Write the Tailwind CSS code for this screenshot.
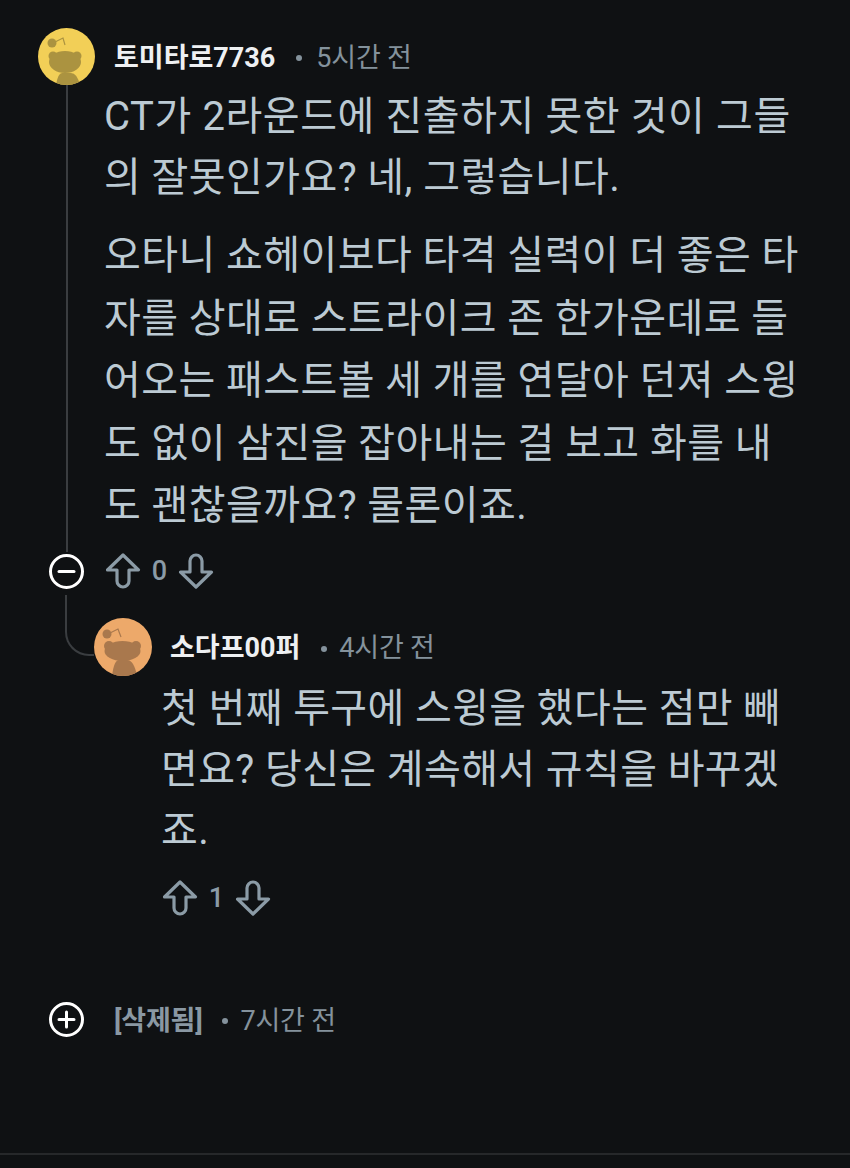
<!doctype html>
<html>
<head>
  <meta charset="UTF-8">
  <meta name="viewport" content="width=device-width, initial-scale=1.0">
  <script src="https://cdn.jsdelivr.net/npm/@tailwindcss/browser@4"></script>
</head>
<body class="bg-[#0f1113] font-['Roboto','Noto_Sans_CJK_KR',sans-serif] w-[850px] h-[1168px] overflow-hidden relative">

  <!-- top comment -->
  <div class="pl-[38px] pt-[28px] flex">
    <div class="w-[57px] shrink-0 flex flex-col items-center">
      <svg width="57" height="57" viewBox="0 0 57 57" class="shrink-0">
        <clipPath id="clipA"><circle cx="28.5" cy="28.5" r="28.5"/></clipPath>
        <circle cx="28.5" cy="28.5" r="28.5" fill="#f2cf57"/>
        <g fill="#ab9340" clip-path="url(#clipA)">
          <circle cx="14" cy="15" r="4.5"/>
          <path d="M17 14 L25 10 L27 17" fill="none" stroke="#ab9340" stroke-width="1.2"/>
          <circle cx="15" cy="28" r="4.5"/>
          <circle cx="39" cy="28" r="4.5"/>
          <ellipse cx="27" cy="34" rx="16" ry="11"/>
          <path d="M18 57 Q20 45 24 45 H33 Q39 45 42 57 Z"/>
        </g>
      </svg>
      <div class="w-[2px] h-[467px] bg-[#3a3d40]"></div>
    </div>
    <div class="pl-[10px] w-[745px]">
      <div class="flex items-center h-[57px] pl-[9px] leading-none pt-[3px]">
        <span class="text-[27px] font-bold text-[#eef0f2]">토미타로7736</span>
        <span class="ml-[21px] w-[6px] h-[6px] rounded-full bg-[#84929c]"></span>
        <span class="ml-[14px] text-[#84929c] text-[27px] tracking-[-0.2px]">5시간 전</span>
      </div>
      <div class="text-[40px] text-[#bccad3] font-normal whitespace-nowrap tracking-[0.42px] -ml-[1px]">
        <p class="leading-[61px] pt-[1px]"><span class="tracking-[0.58px]">CT가 2라운드에 진출하지 못한 것이 그들</span><br>의 잘못인가요? 네, 그렇습니다.</p>
        <p class="mt-[17px] leading-[62.5px]">오타니 쇼헤이보다 타격 실력이 더 좋은 타<br>자를 상대로 스트라이크 존 한가운데로 들<br>어오는 패스트볼 세 개를 연달아 던져 스윙<br>도 없이 삼진을 잡아내는 걸 보고 화를 내<br>도 괜찮을까요? 물론이죠.</p>
      </div>
    </div>
  </div>

  <!-- votes row -->
  <div class="flex items-center pl-[49px] h-[38px]">
    <svg width="35" height="35" viewBox="0 0 35 35" fill="none" stroke="#fff" stroke-width="3"><circle cx="17.5" cy="17.5" r="16"/><path d="M10 17.5H25" stroke-linecap="round"/></svg>
    <svg class="ml-[21px]" width="36" height="38" viewBox="0 0 36 38" fill="none" stroke="#8b9ba6" stroke-width="3.2" stroke-linejoin="round"><path d="M18 3 L33.5 18 H24 V29 a6 6 0 0 1 -12 0 V18 H2.5 Z"/></svg>
    <span class="w-[37px] text-center text-[27px] font-medium text-[#8b9ba6]">0</span>
    <svg width="36" height="38" viewBox="0 0 36 38" fill="none" stroke="#8b9ba6" stroke-width="3.2" stroke-linejoin="round"><path d="M18 35 L33.5 20 H24 V9 a6 6 0 0 0 -12 0 V20 H2.5 Z"/></svg>
  </div>

  <!-- reply -->
  <div class="flex pl-[65px] mt-[5px]">
    <div class="w-[29px] h-[61px] border-l-2 border-b-2 border-[#3a3d40] rounded-bl-[24px] shrink-0"></div>
    <div class="pt-[23px]">
      <div class="flex items-center h-[58px]">
        <svg width="58" height="58" viewBox="0 0 58 58" class="shrink-0">
          <clipPath id="clipB"><circle cx="29" cy="29" r="29"/></clipPath>
          <circle cx="29" cy="29" r="29" fill="#eda96a"/>
          <g fill="#a9784d" clip-path="url(#clipB)">
            <circle cx="13" cy="16" r="4.5"/>
            <path d="M16 15 L24 11 L27 19" fill="none" stroke="#a9784d" stroke-width="1.2"/>
            <circle cx="15" cy="28" r="5"/>
            <circle cx="42" cy="28" r="5"/>
            <ellipse cx="28.5" cy="33" rx="18" ry="10"/>
            <path d="M18 58 Q20 42 25 42 H33 Q40 42 43 58 Z"/>
          </g>
        </svg>
        <span class="ml-[18px] text-[27px] font-bold text-[#eef0f2] leading-none pt-[3px]">소다프00퍼</span>
        <span class="ml-[21px] mt-[3px] w-[6px] h-[6px] rounded-full bg-[#84929c]"></span>
        <span class="ml-[12px] text-[#84929c] text-[27px] leading-none pt-[3px] tracking-[-0.2px]">4시간 전</span>
      </div>
      <div class="pl-[67px] text-[40px] leading-[61px] text-[#bccad3] font-normal whitespace-nowrap tracking-[0.38px] mt-[2px]">
        <p>첫 번째 투구에 스윙을 했다는 점만 빼<br>면요? 당신은 계속해서 규칙을 바꾸겠<br>죠.</p>
      </div>
      <div class="flex items-center h-[38px] pl-[68px] mt-[18px]">
        <svg width="36" height="38" viewBox="0 0 36 38" fill="none" stroke="#8b9ba6" stroke-width="3.2" stroke-linejoin="round"><path d="M18 3 L33.5 18 H24 V29 a6 6 0 0 1 -12 0 V18 H2.5 Z"/></svg>
        <span class="w-[37px] text-center text-[27px] font-medium text-[#8b9ba6]">1</span>
        <svg width="36" height="38" viewBox="0 0 36 38" fill="none" stroke="#8b9ba6" stroke-width="3.2" stroke-linejoin="round"><path d="M18 35 L33.5 20 H24 V9 a6 6 0 0 0 -12 0 V20 H2.5 Z"/></svg>
      </div>
    </div>
  </div>

  <!-- collapsed comment -->
  <div class="flex items-center pl-[49px] mt-[85px] leading-none">
    <svg width="35" height="35" viewBox="0 0 35 35" fill="none" stroke="#fff" stroke-width="3"><circle cx="17.5" cy="17.5" r="16"/><path d="M10 17.5H25M17.5 10V25" stroke-linecap="round"/></svg>
    <span class="ml-[30px] pt-[3px] text-[27px] font-bold text-[#8a98a3] tracking-[-0.2px]">[삭제됨]</span>
    <span class="ml-[20px] mt-[3px] w-[6px] h-[6px] rounded-full bg-[#84929c]"></span>
    <span class="ml-[12px] pt-[3px] text-[#84929c] text-[27px] tracking-[-0.2px]">7시간 전</span>
  </div>

  <!-- bottom bar -->
  <div class="absolute left-0 right-0 top-[1153px] h-[2px] bg-[#26282a]"></div>
</body>
</html>
